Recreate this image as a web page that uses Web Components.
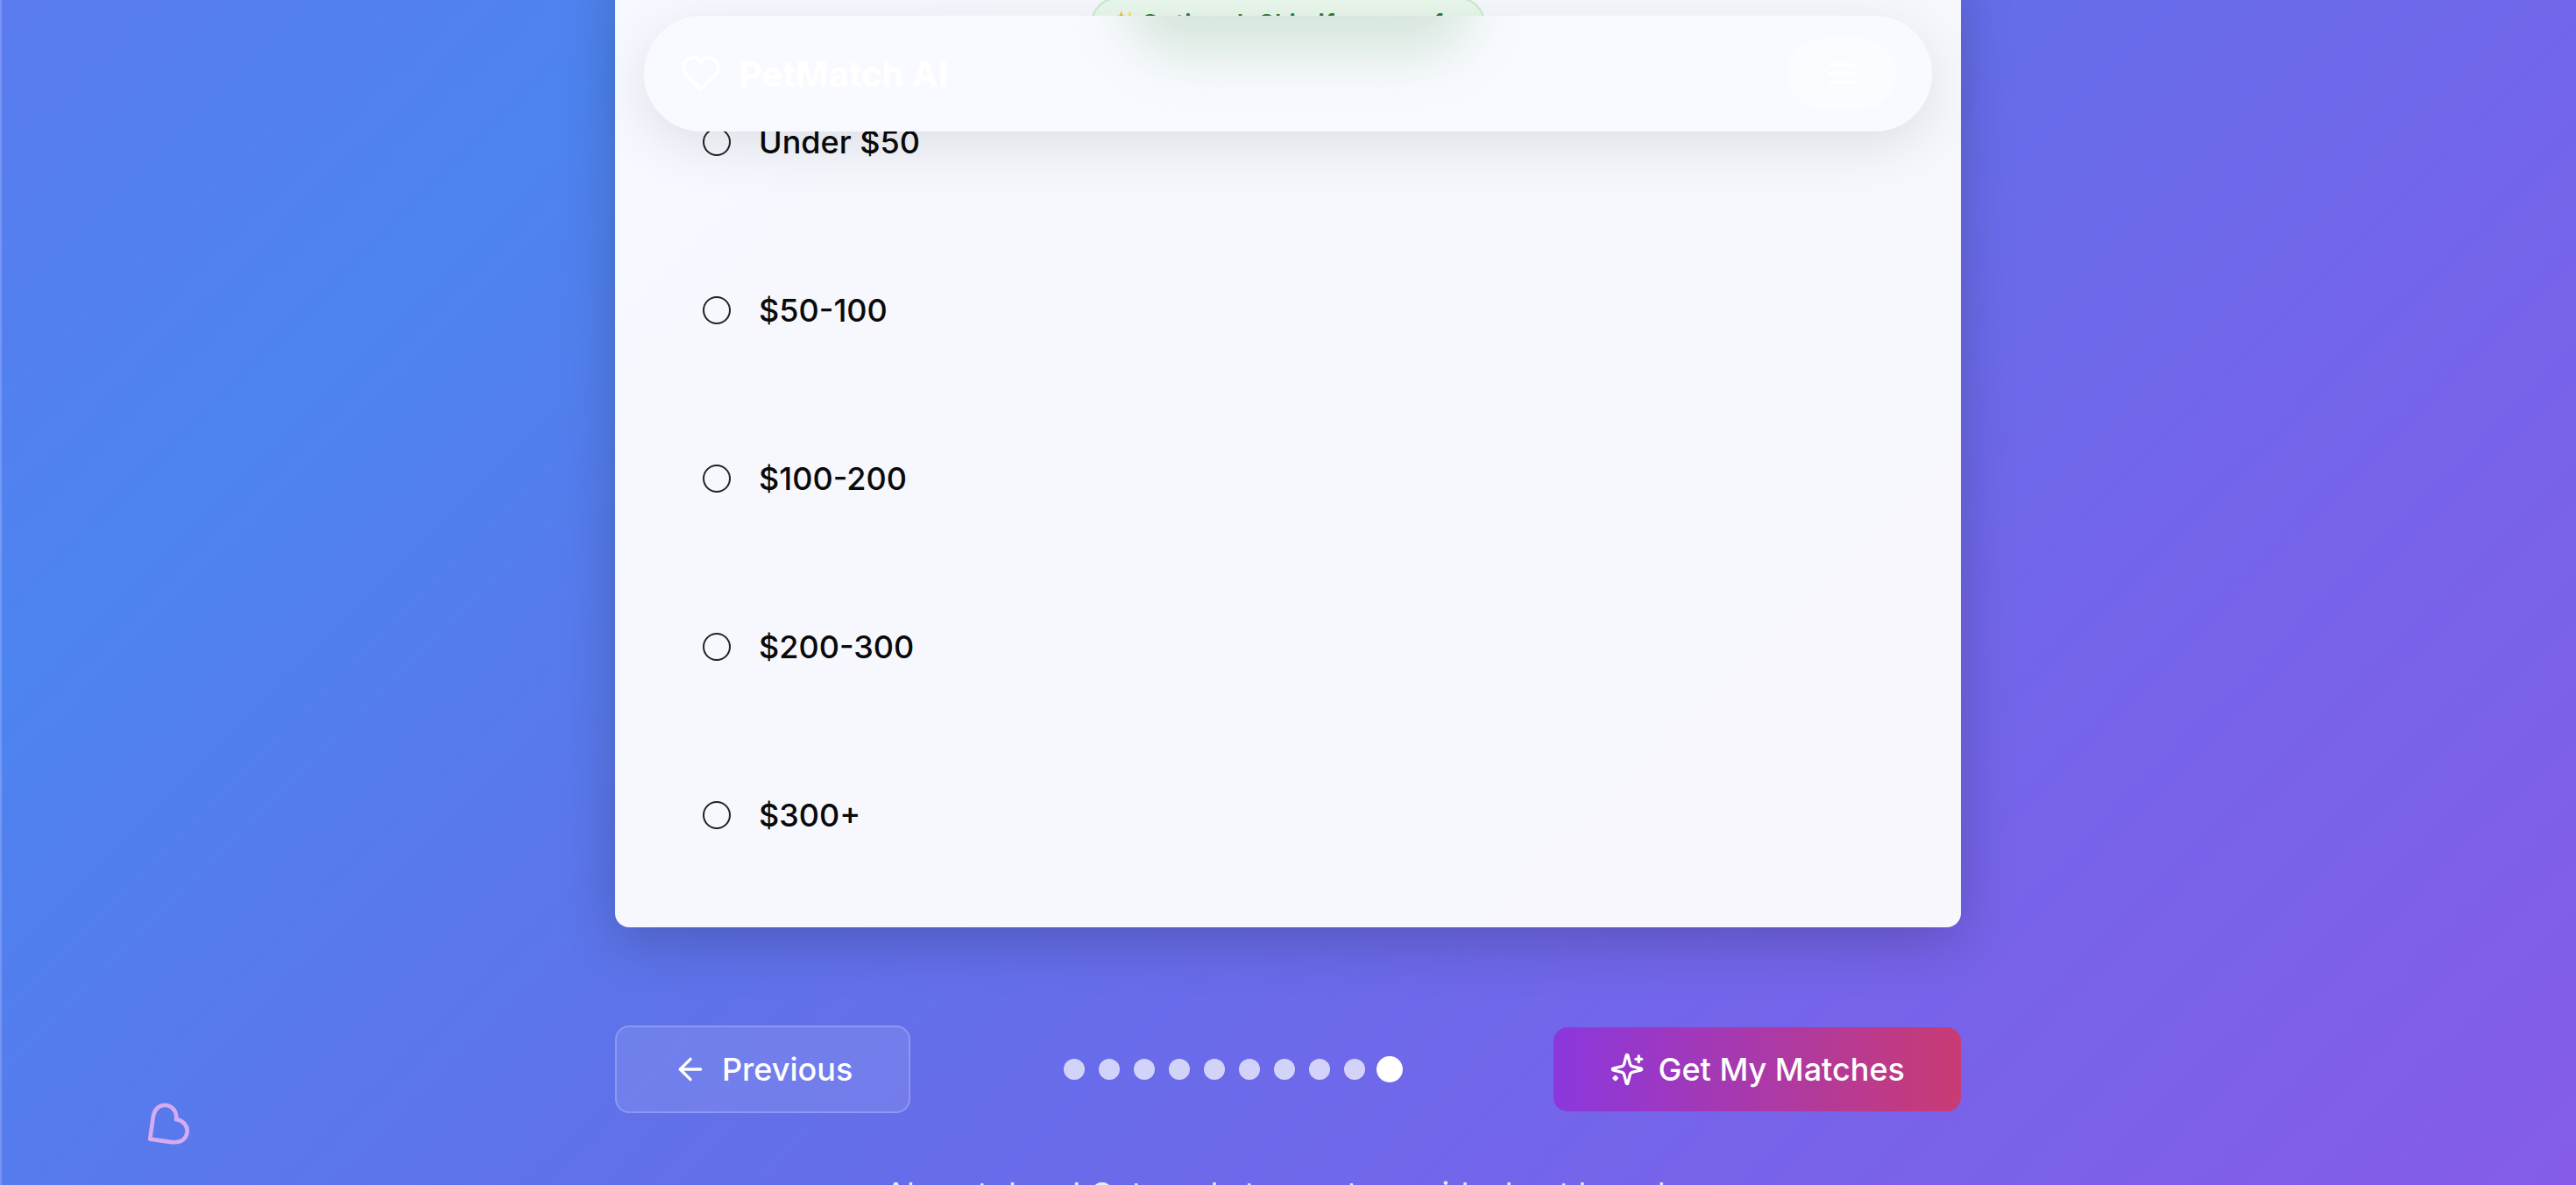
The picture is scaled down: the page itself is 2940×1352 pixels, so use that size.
<!DOCTYPE html>
<html>
<head>
<meta charset="utf-8">
<title>PetMatch AI</title>
<style>
    html, body { margin: 0; height: 100%; }
    body {
        height: 1352px;
        overflow: hidden;
        font-family: Inter, "Liberation Sans", sans-serif;
        background: linear-gradient(135deg, #5a7bee 0%, #4d84ef 18%, #5f72ea 45%, #7266ea 70%, #855ce8 100%);
    }
</style>
</head>
<body>
<pet-app>
    <pet-nav></pet-nav>
    <float-heart></float-heart>
    <quiz-card>
        <option-pill>Optional: Skip if you prefer</option-pill>
        <budget-option>Under $50</budget-option>
        <budget-option>$50-100</budget-option>
        <budget-option>$100-200</budget-option>
        <budget-option>$200-300</budget-option>
        <budget-option>$300+</budget-option>
    </quiz-card>
    <quiz-footer></quiz-footer>
</pet-app>

<script>
    class PetApp extends HTMLElement {
        constructor() {
            super()
            this.attachShadow({ mode: 'open' })
            this.shadowRoot.innerHTML = `
            <style>
                :host { display: block; position: relative; height: 1352px; overflow: hidden; box-shadow: inset 2px 0 0 rgba(255,255,255,.2); }
                main { width: 1536px; margin: 0 auto; }
            </style>
            <main><slot></slot></main>
            `
        }
    }

    class PetNav extends HTMLElement {
        constructor() {
            super()
            this.attachShadow({ mode: 'open' })
            this.shadowRoot.innerHTML = `
            <style>
                :host {
                    display: block;
                    position: absolute; z-index: 5; left: 735px; top: 18px;
                    width: 1470px; height: 132px;
                    border-radius: 66px;
                    box-shadow: 0 16px 64px rgba(0,0,0,.1);
                }
                .bar {
                    display: flex; align-items: center; justify-content: space-between;
                    position: relative; overflow: hidden;
                    height: 100%; box-sizing: border-box; padding: 0 41px;
                    border-radius: 66px;
                    background: #f9faff;
                }
                /* stands in for the glass blur of the green pill behind the bar */
                .glow {
                    position: absolute; left: 550px; top: -78px; width: 395px; height: 122px;
                    border-radius: 60px;
                    background: #d6e6dc;
                    filter: blur(30px);
                }
                .brand, .menu { position: relative; }
                .brand { display: flex; align-items: center; gap: 20px; color: #fff; font-size: 40px; font-weight: 700; }
                svg { display: block; }
                .menu { display: flex; align-items: center; justify-content: center; width: 124px; height: 81px; border-radius: 40px; background: rgba(255,255,255,.4); }
            </style>
            <div class="bar">
                <div class="glow"></div>
                <div class="brand">
                    <svg width="48" height="48" viewBox="0 0 24 24" fill="none" stroke="#fff" stroke-width="2" stroke-linecap="round" stroke-linejoin="round"><path d="M19 14c1.49-1.46 3-3.21 3-5.5A5.5 5.5 0 0 0 16.5 3c-1.76 0-3 .5-4.5 2-1.5-1.5-2.74-2-4.5-2A5.5 5.5 0 0 0 2 8.5c0 2.3 1.5 4.05 3 5.5l7 7Z"/></svg>
                    <span>PetMatch AI</span>
                </div>
                <div class="menu">
                    <svg width="40" height="40" viewBox="0 0 24 24" fill="none" stroke="#fff" stroke-width="2"><path d="M3 6h18M3 12h18M3 18h18"/></svg>
                </div>
            </div>
            `
        }
    }

    class FloatHeart extends HTMLElement {
        constructor() {
            super()
            this.attachShadow({ mode: 'open' })
            this.shadowRoot.innerHTML = `
            <style>
                :host { display: block; position: absolute; left: 160px; top: 1259px; width: 56px; height: 56px; transform: rotate(53deg); }
                svg { display: block; }
            </style>
            <svg width="56" height="56" viewBox="0 0 24 24" fill="none" stroke="#d5abf2" stroke-width="2" stroke-linecap="round" stroke-linejoin="round"><path d="M19 14c1.49-1.46 3-3.21 3-5.5A5.5 5.5 0 0 0 16.5 3c-1.76 0-3 .5-4.5 2-1.5-1.5-2.74-2-4.5-2A5.5 5.5 0 0 0 2 8.5c0 2.3 1.5 4.05 3 5.5l7 7Z"/></svg>
            `
        }
    }

    class QuizCard extends HTMLElement {
        constructor() {
            super()
            this.attachShadow({ mode: 'open' })
            this.shadowRoot.innerHTML = `
            <style>
                :host {
                    display: flex; flex-direction: column;
                    margin-top: -40px; padding: 37px 0 32px;
                    border-radius: 16px;
                    background: rgba(255,255,255,.95);
                    box-shadow: 0 16px 64px rgba(0,0,0,.2);
                }
            </style>
            <slot></slot>
            `
        }
    }

    class OptionPill extends HTMLElement {
        constructor() {
            super()
            this.attachShadow({ mode: 'open' })
            this.shadowRoot.innerHTML = `
            <style>
                :host {
                    display: flex; align-self: center; align-items: center;
                    box-sizing: border-box; height: 60px; margin-bottom: 9px; padding: 0 18px 0 20px;
                    border: 2px solid #c2eec9; border-radius: 30px;
                    background: #e9f7ec; color: #2e7d42;
                    font-size: 28px; font-weight: 600; letter-spacing: .45px;
                }
            </style>
            <span>✨</span><slot></slot>
            `
        }
    }

    class BudgetOption extends HTMLElement {
        constructor() {
            super()
            this.attachShadow({ mode: 'open' })
            this.shadowRoot.innerHTML = `
            <style>
                :host {
                    display: flex; align-items: center; gap: 32px;
                    height: 192px; padding-left: 100px;
                    color: #0a0a0a; font-size: 36px; font-weight: 500;
                }
                input { appearance: none; box-sizing: border-box; width: 32px; height: 32px; margin: 0; border: 2px solid #222; border-radius: 50%; background: transparent; }
            </style>
            <input type="radio" name="budget"><slot></slot>
            `
        }
    }

    class QuizFooter extends HTMLElement {
        constructor() {
            super()
            this.attachShadow({ mode: 'open' })
            this.shadowRoot.innerHTML = `
            <style>
                :host { display: block; margin-top: 112px; color: #fff; }
                .row { display: flex; align-items: center; justify-content: space-between; }
                button {
                    display: flex; align-items: center; gap: 16px;
                    box-sizing: border-box; padding: 0 64px; margin: 0;
                    font: 500 36px Inter, "Liberation Sans", sans-serif; color: #fff;
                    border-radius: 16px;
                }
                svg { display: block; }
                .prev { height: 100px; background: rgba(255,255,255,.1); border: 2px solid rgba(255,255,255,.2); }
                .next { height: 96px; border: 0; background: linear-gradient(to right, #8b37df, #c93b74); }
                .dots { display: flex; gap: 16px; }
                .dots i { display: block; width: 24px; height: 24px; border-radius: 50%; background: rgba(255,255,255,.7); }
                .dots i.on { background: #fff; transform: scale(1.25); }
                p { margin: 70px 0 0; text-align: center; font-size: 36px; font-weight: 400; color: rgba(255,255,255,.9); }
            </style>
            <div class="row">
                <button class="prev">
                    <svg width="40" height="40" viewBox="0 0 24 24" fill="none" stroke="#fff" stroke-width="2" stroke-linecap="round" stroke-linejoin="round"><path d="m12 19-7-7 7-7"/><path d="M19 12H5"/></svg>
                    Previous
                </button>
                <div class="dots"><i></i><i></i><i></i><i></i><i></i><i></i><i></i><i></i><i></i><i class="on"></i></div>
                <button class="next">
                    <svg width="40" height="40" viewBox="0 0 24 24" fill="none" stroke="#fff" stroke-width="2" stroke-linecap="round" stroke-linejoin="round"><path d="M9.937 15.5A2 2 0 0 0 8.5 14.063l-6.135-1.582a.5.5 0 0 1 0-.962L8.5 9.936A2 2 0 0 0 9.937 8.5l1.582-6.135a.5.5 0 0 1 .963 0L14.063 8.5A2 2 0 0 0 15.5 9.937l6.135 1.581a.5.5 0 0 1 0 .964L15.5 14.063a2 2 0 0 0-1.437 1.437l-1.582 6.135a.5.5 0 0 1-.963 0z"/><path d="M20 3v4"/><path d="M22 5h-4"/><path d="M4 17v2"/><path d="M5 18H3"/></svg>
                    Get My Matches
                </button>
            </div>
            <p>Almost done! Get ready to meet your ideal pet breeds.</p>
            `
        }
    }

    customElements.define('pet-app', PetApp)
    customElements.define('pet-nav', PetNav)
    customElements.define('float-heart', FloatHeart)
    customElements.define('quiz-card', QuizCard)
    customElements.define('option-pill', OptionPill)
    customElements.define('budget-option', BudgetOption)
    customElements.define('quiz-footer', QuizFooter)
</script>
</body>
</html>
